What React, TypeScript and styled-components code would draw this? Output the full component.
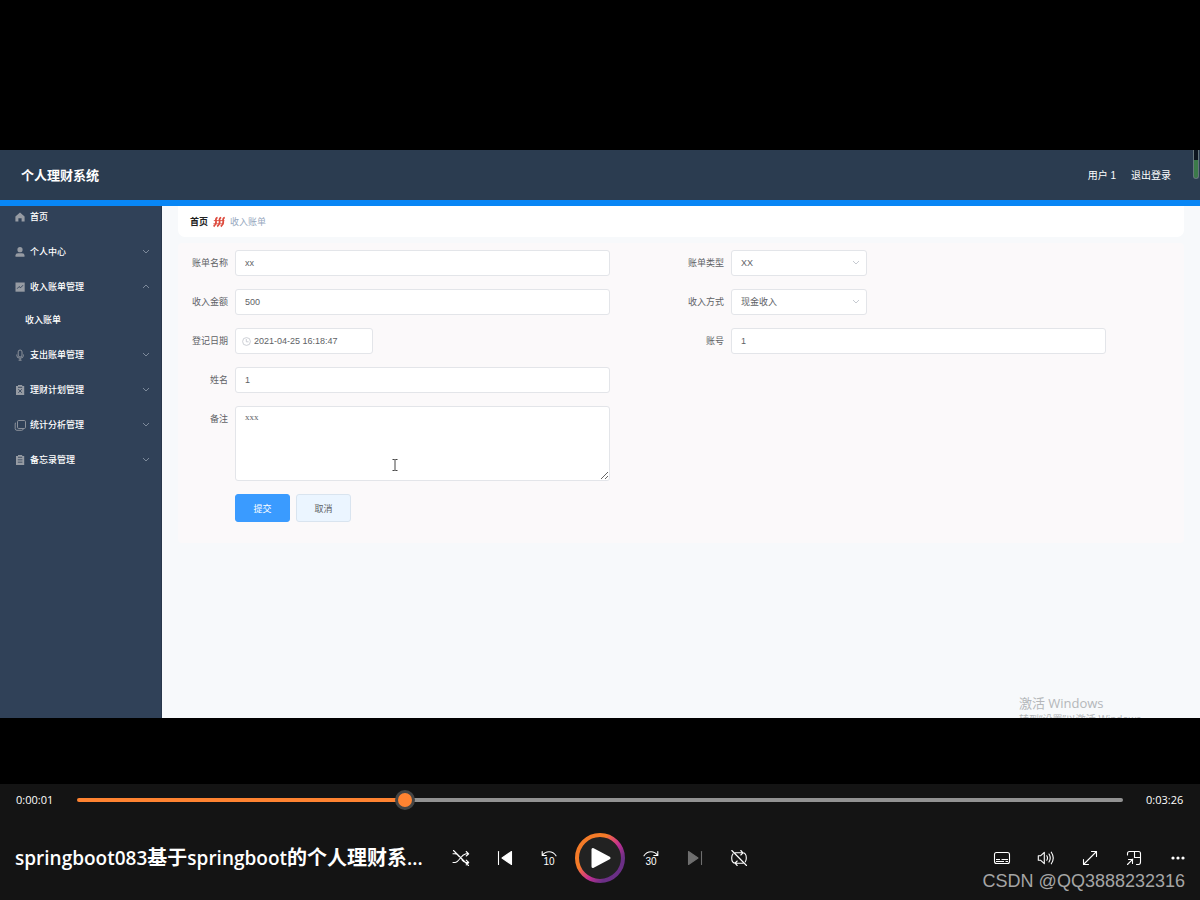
import React from "react";
import styled, { createGlobalStyle, css } from "styled-components";

const cjk = `"Noto Sans CJK SC", sans-serif`;

const GlobalStyle = createGlobalStyle`
  *, *::before, *::after { box-sizing: border-box; }
  body { margin: 0; background: #000; font-family: "Liberation Sans", ${cjk}; }
  button, input, select, textarea { font: inherit; margin: 0; }
  ul { list-style: none; margin: 0; padding: 0; }
  a { color: inherit; text-decoration: none; }
`;

const Page = styled.div`
  position: relative;
  display: flex;
  flex-direction: column;
  min-height: 100vh;
  background: #000;
`;

const Stage = styled.main`
  flex: 1;
  display: flex;
  padding: 150px 0 66px;
`;

const Frame = styled.div`
  position: relative;
  flex: 1;
  display: flex;
  flex-direction: column;
  overflow: hidden;
  background: #f7f9fb;
`;

const Header = styled.header`
  display: flex;
  align-items: center;
  justify-content: space-between;
  height: 56px;
  padding: 2px 29px 0 21px;
  background: #2b3c50;
  border-bottom: 6px solid #0886f5;
  color: #fff;
`;

const Brand = styled.h1`
  margin: 0;
  font-size: 13px;
  line-height: 20px;
  font-weight: 700;
`;

const Account = styled.div`
  display: flex;
  gap: 15px;
  font-size: 10px;
  line-height: 20px;
`;

const Meter = styled.div`
  position: absolute;
  top: 0;
  right: 1px;
  width: 6px;
  height: 29px;
  border: 1px solid #66767c;
  border-top: 0;
  border-radius: 0 0 3px 3px;
  background: linear-gradient(#0d1620 10px, #3c7a4a 10px);
`;

const Body = styled.div`
  flex: 1;
  display: flex;
`;

const Sidebar = styled.nav`
  flex: none;
  width: 162px;
  padding: 1px 11px 0 14px;
  background: #304158;
  border-right: 1px solid #28374b;
  color: #fff;
`;

const Menu = styled.ul`
  display: flex;
  flex-direction: column;
  gap: 15px;
`;

const MenuLink = styled.a`
  display: flex;
  align-items: center;
  gap: 4px;
  height: 20px;
  font-size: 9px;
  line-height: 20px;
  font-weight: 500;
`;

const SubMenu = styled.ul`
  margin-top: 13px;
  padding-left: 11px;
`;

const Grow = styled.span`
  flex: 1;
`;

const Content = styled.section`
  flex: 1;
  min-width: 0;
  padding: 0 16px;
`;

const Breadcrumb = styled.div`
  display: flex;
  align-items: center;
  gap: 5px;
  height: 31px;
  padding: 0 12px;
  border-radius: 0 0 7px 7px;
  background: #fff;
  font-size: 9px;
  line-height: 20px;
  color: #97a8be;
`;

const CrumbHome = styled.a`
  font-weight: 700;
  color: #222;
`;

const Card = styled.form`
  margin-top: 6px;
  padding: 7px 7px 21px;
  border-radius: 4px;
  background: #fbf9fa;
  font-size: 9px;
  color: #606266;
`;

const Grid = styled.div`
  display: grid;
  grid-template-columns: 1fr 1fr;
  gap: 13px 0;
`;

const Field = styled.div<{ $first?: boolean }>`
  ${(p) => p.$first && "grid-column: 1;"}
  display: flex;
  gap: 7px;
  padding-right: 71px;
`;

const Label = styled.label`
  flex: none;
  width: 43px;
  line-height: 26px;
  text-align: right;
  white-space: nowrap;
`;

const box = css`
  border: 1px solid #e3e5e9;
  border-radius: 3px;
  background: #fff;
  color: #606266;
  outline: none;
`;

const TextInput = styled.input`
  ${box}
  flex: 1;
  min-width: 0;
  height: 26px;
  padding: 0 9px;
`;

const DateBox = styled.div`
  ${box}
  display: flex;
  align-items: center;
  gap: 3px;
  width: 138px;
  height: 26px;
  padding: 0 6px;
`;

const DateInput = styled.input`
  flex: 1;
  min-width: 0;
  padding: 0;
  border: 0;
  background: none;
  color: inherit;
  outline: none;
`;

const SelectBox = styled.div`
  position: relative;
  width: 136px;

  svg {
    position: absolute;
    top: 9px;
    right: 7px;
    pointer-events: none;
  }
`;

const Select = styled.select`
  ${box}
  appearance: none;
  width: 100%;
  height: 26px;
  padding: 0 9px;
`;

const AreaBox = styled.div`
  position: relative;
  flex: 1;
  display: flex;
`;

const TextArea = styled.textarea`
  ${box}
  flex: 1;
  height: 75px;
  padding: 4px 9px;
  font-family: "Liberation Serif", serif;
  font-size: 9px;
  line-height: 13px;
`;

const Cursor = styled.svg`
  position: absolute;
  left: 157px;
  top: 53px;
`;

const Actions = styled.div`
  display: flex;
  gap: 6px;
  margin-top: 13px;
  padding-left: 50px;
`;

const ActionButton = styled.button<{ $primary?: boolean }>`
  width: 55px;
  height: 28px;
  padding: 0;
  border: 1px solid ${(p) => (p.$primary ? "#3a9bff" : "#d9e4ef")};
  border-radius: 3px;
  background: ${(p) => (p.$primary ? "#3a9bff" : "#ebf5ff")};
  color: ${(p) => (p.$primary ? "#fff" : "#606266")};
`;

const Activation = styled.div`
  position: absolute;
  right: 49px;
  bottom: -9px;
  font-family: "Open Sans", ${cjk};
  color: #b4b7ba;
`;

const ActivationTitle = styled.div`
  font-size: 13px;
  line-height: 18px;
`;

const ActivationHint = styled.div`
  font-size: 10px;
  line-height: 15px;
`;

const Player = styled.footer`
  background: #141414;
  color: #fff;
  font-family: "Open Sans", ${cjk};
`;

const Timeline = styled.div`
  display: flex;
  align-items: center;
  gap: 23px;
  height: 32px;
  padding: 0 16px;
  font-size: 11px;
  line-height: 16px;
`;

const Time = styled.span`
  width: 38px;
`;

const Seek = styled.input<{ $played: number }>`
  appearance: none;
  flex: 1;
  min-width: 0;
  height: 20px;
  background: none;
  outline: none;

  &::-webkit-slider-runnable-track {
    height: 4px;
    border-radius: 2px;
    background: linear-gradient(
      to right,
      #ff8331 ${(p) => p.$played}%,
      #929292 ${(p) => p.$played}%
    );
  }

  &::-webkit-slider-thumb {
    appearance: none;
    width: 20px;
    height: 20px;
    margin-top: -8px;
    border: 3px solid #454545;
    border-radius: 50%;
    background: #ff8331;
  }
`;

const Controls = styled.div`
  display: grid;
  grid-template-columns: minmax(0, 1fr) auto minmax(0, 1fr);
  align-items: center;
  height: 84px;
`;

const Title = styled.h2`
  margin: 0;
  padding-left: 15px;
  overflow: hidden;
  white-space: nowrap;
  font-size: 19px;
  line-height: 28px;
  font-weight: 600;
`;

const Han = styled.span`
  font-size: 20px;
  font-weight: 700;
`;

const Group = styled.div<{ $end?: boolean }>`
  display: flex;
  align-items: center;
  justify-content: ${(p) => (p.$end ? "flex-end" : "center")};
`;

const IconButton = styled.button`
  display: grid;
  place-items: center;
  width: 44px;
  height: 44px;
  padding: 0;
  border: 0;
  background: none;
  color: #fff;

  &:disabled {
    color: #6f6f6f;
  }
`;

const PlayButton = styled.button`
  display: grid;
  width: 50px;
  height: 50px;
  margin: 0 4px;
  padding: 0;
  border: 0;
  background: none;
`;

const Credit = styled.div`
  position: absolute;
  right: 15px;
  bottom: 8px;
  font-size: 18px;
  line-height: 22px;
  color: #a5a5a5;
`;

const Chevron = ({ up, color = "#8693a3" }: { up?: boolean; color?: string }) => (
  <svg width="8" height="8" viewBox="0 0 8 8" fill="none" stroke={color} strokeWidth="0.9">
    <path d={up ? "M1 5 4 2 7 5" : "M1 2 4 5 7 2"} />
  </svg>
);

const menuIcons: Record<string, React.ReactNode> = {
  home: <path fill="currentColor" d="M6 1.4 10.6 5.4V10.6H7.6V7.2H4.4V10.6H1.4V5.4Z" />,
  user: (
    <g fill="currentColor">
      <circle cx="6" cy="3.7" r="2.6" />
      <path d="M1.5 10.7V9.2Q1.5 7.2 4 7.2H8Q10.5 7.2 10.5 9.2V10.7Z" />
    </g>
  ),
  chart: (
    <>
      <path fill="currentColor" d="M1.5 1.5H10.7V10.7H1.5Z" />
      <path stroke="#304158" d="M3.2 7.7 5 5.6 6.7 6.7 9 4.2" />
    </>
  ),
  mic: (
    <g stroke="currentColor">
      <rect x="4.2" y="1" width="3.8" height="7" rx="1.9" />
      <path d="M2.8 5.5V6.6Q2.8 9.2 6.1 9.2 9.4 9.2 9.4 6.6V5.5M6.1 9.2V11.2M4.6 11.2H7.6" />
    </g>
  ),
  plan: (
    <>
      <path fill="currentColor" d="M2 2H4V1H8.2V2H10.2V11H2Z" />
      <path stroke="#304158" d="M4 3.3H8.2M4.4 5.2 7.8 8.8M7.8 5.2 4.4 8.8" />
    </>
  ),
  copy: (
    <g stroke="currentColor">
      <rect x="3.5" y="1.5" width="8" height="8" rx="1.2" />
      <path d="M2 3.6Q1.2 3.8 1.2 5V9.6Q1.2 11.3 3 11.3H7.6Q9 11.3 9.3 10" />
    </g>
  ),
  memo: (
    <>
      <path fill="currentColor" d="M2 2H4V1H8.2V2H10.2V11H2Z" />
      <path stroke="#304158" d="M4 3.3H8.2M3.8 5.8H8.4M3.8 8.2H8.4" strokeWidth="0.8" />
    </>
  ),
};

const MenuIcon = ({ name }: { name: string }) => (
  <svg width="12" height="12" viewBox="0 0 12 12" fill="none" color="#969ba3" strokeWidth="0.9">
    {menuIcons[name]}
  </svg>
);

const menu = [
  { icon: "home", text: "首页" },
  { icon: "user", text: "个人中心", arrow: true },
  { icon: "chart", text: "收入账单管理", arrow: true, children: ["收入账单"] },
  { icon: "mic", text: "支出账单管理", arrow: true },
  { icon: "plan", text: "理财计划管理", arrow: true },
  { icon: "copy", text: "统计分析管理", arrow: true },
  { icon: "memo", text: "备忘录管理", arrow: true },
];

const Glyph = ({ children }: { children: React.ReactNode }) => (
  <svg
    width="18"
    height="18"
    viewBox="0 0 18 18"
    fill="none"
    stroke="currentColor"
    strokeWidth="1.1"
    strokeLinecap="round"
    strokeLinejoin="round"
  >
    {children}
  </svg>
);

const SkipText = ({ children }: { children: string }) => (
  <text
    x="9"
    y="16"
    textAnchor="middle"
    fontSize="10"
    fontFamily="Liberation Sans"
    fill="currentColor"
    stroke="none"
  >
    {children}
  </text>
);

export default function App() {
  return (
    <Page>
      <GlobalStyle />
      <Stage>
        <Frame>
          <Header>
            <Brand>个人理财系统</Brand>
            <Account>
              <span>用户 1</span>
              <a href="#logout">退出登录</a>
            </Account>
          </Header>
          <Meter />
          <Body>
            <Sidebar>
              <Menu>
                {menu.map((item) => (
                  <li key={item.text}>
                    <MenuLink href="#menu">
                      <MenuIcon name={item.icon} />
                      {item.text}
                      <Grow />
                      {item.arrow && <Chevron up={!!item.children} />}
                    </MenuLink>
                    {item.children && (
                      <SubMenu>
                        {item.children.map((child) => (
                          <li key={child}>
                            <MenuLink href="#bill">{child}</MenuLink>
                          </li>
                        ))}
                      </SubMenu>
                    )}
                  </li>
                ))}
              </Menu>
            </Sidebar>
            <Content>
              <Breadcrumb>
                <CrumbHome href="#home">首页</CrumbHome>
                <svg width="12" height="12" viewBox="0 0 12 12" fill="none" stroke="#dd4b3e" strokeWidth="1.7">
                  <path d="M4.6 1.5Q2.4 2 3 5T.6 10.5M8.2 1.5Q6 2 6.6 5T4.2 10.5M11.8 1.5Q9.6 2 10.2 5T7.8 10.5" />
                  <path d="M.8 4.6H11.4M.4 7.8H10.8" strokeWidth="0.9" />
                </svg>
                <span>收入账单</span>
              </Breadcrumb>
              <Card onSubmit={(e) => e.preventDefault()}>
                <Grid>
                  <Field>
                    <Label htmlFor="name">账单名称</Label>
                    <TextInput id="name" defaultValue="xx" />
                  </Field>
                  <Field>
                    <Label htmlFor="type">账单类型</Label>
                    <SelectBox>
                      <Select id="type">
                        <option>XX</option>
                      </Select>
                      <Chevron color="#c0c4cc" />
                    </SelectBox>
                  </Field>
                  <Field>
                    <Label htmlFor="amount">收入金额</Label>
                    <TextInput id="amount" defaultValue="500" />
                  </Field>
                  <Field>
                    <Label htmlFor="method">收入方式</Label>
                    <SelectBox>
                      <Select id="method">
                        <option>现金收入</option>
                      </Select>
                      <Chevron color="#c0c4cc" />
                    </SelectBox>
                  </Field>
                  <Field>
                    <Label htmlFor="date">登记日期</Label>
                    <DateBox>
                      <svg width="9" height="9" viewBox="0 0 9 9" fill="none" stroke="#c0c4cc" strokeWidth="0.8">
                        <circle cx="4.5" cy="4.5" r="3.9" />
                        <path d="M4.3 2V4.8H6.6" />
                      </svg>
                      <DateInput id="date" defaultValue="2021-04-25 16:18:47" />
                    </DateBox>
                  </Field>
                  <Field>
                    <Label htmlFor="account">账号</Label>
                    <TextInput id="account" defaultValue="1" />
                  </Field>
                  <Field $first>
                    <Label htmlFor="person">姓名</Label>
                    <TextInput id="person" defaultValue="1" />
                  </Field>
                  <Field $first>
                    <Label htmlFor="note">备注</Label>
                    <AreaBox>
                      <TextArea id="note" defaultValue="xxx" />
                      <Cursor width="6" height="12" viewBox="0 0 6 12" fill="none" stroke="#444">
                        <path d="M.5 .5H2.5L3 1 3.5 .5H5.5M3 1V11M.5 11.5H2.5L3 11 3.5 11.5H5.5" />
                      </Cursor>
                    </AreaBox>
                  </Field>
                </Grid>
                <Actions>
                  <ActionButton type="submit" $primary>
                    提交
                  </ActionButton>
                  <ActionButton type="button">取消</ActionButton>
                </Actions>
              </Card>
            </Content>
          </Body>
          <Activation>
            <ActivationTitle>激活 Windows</ActivationTitle>
            <ActivationHint>转到“设置”以激活 Windows。</ActivationHint>
          </Activation>
        </Frame>
      </Stage>
      <Player>
        <Timeline>
          <Time>0:00:01</Time>
          <Seek type="range" aria-label="Seek" min={0} max={100} defaultValue={31} $played={31} />
          <Time>0:03:26</Time>
        </Timeline>
        <Controls>
          <Title>
            springboot083<Han>基于</Han>springboot<Han>的个人理财系</Han>...
          </Title>
          <Group>
            <IconButton aria-label="Shuffle off">
              <Glyph>
                <path d="M1 13.5H3Q5 13.5 8 9.5T14 4.8H16.5M14.2 2.5 16.7 4.8 14.2 7M1 4.8H3Q5 4.8 7 7.5M10 10.8Q12 13.5 14 13.5H16.5M14.2 11.2 16.7 13.5 14.2 15.8M1.5 1.5 16.5 16.5" />
              </Glyph>
            </IconButton>
            <IconButton aria-label="Previous">
              <Glyph>
                <path d="M2.5 2.5V15.5" />
                <path fill="currentColor" d="M15.5 2.5V15.5L6 9Z" />
              </Glyph>
            </IconButton>
            <IconButton aria-label="Back 10 seconds">
              <Glyph>
                <path d="M2.2 2.5V6.5H6.2M2.5 6.2Q5 2.8 9 2.8 13.5 2.8 16 6.8" />
                <SkipText>10</SkipText>
              </Glyph>
            </IconButton>
            <PlayButton aria-label="Play">
              <svg width="50" height="50" viewBox="0 0 50 50">
                <defs>
                  <linearGradient id="ring" x1="0.1" y1="0.15" x2="0.9" y2="0.85">
                    <stop offset="0.3" stopColor="#f47b28" />
                    <stop offset="0.4" stopColor="#e85a58" />
                    <stop offset="0.6" stopColor="#c22f92" />
                    <stop offset="0.85" stopColor="#6b2f86" />
                  </linearGradient>
                </defs>
                <circle cx="25" cy="25" r="23" fill="#222" stroke="url(#ring)" strokeWidth="4" />
                <path
                  d="M18 16.5V33.5L34 25Z"
                  fill="#fff"
                  stroke="#fff"
                  strokeWidth="3"
                  strokeLinejoin="round"
                />
              </svg>
            </PlayButton>
            <IconButton aria-label="Forward 30 seconds">
              <Glyph>
                <path d="M15.8 2.5V6.5H11.8M15.5 6.2Q13 2.8 9 2.8 4.5 2.8 2 6.8" />
                <SkipText>30</SkipText>
              </Glyph>
            </IconButton>
            <IconButton aria-label="Next" disabled>
              <Glyph>
                <path d="M15.5 2.5V15.5" />
                <path fill="currentColor" d="M2.5 2.5V15.5L12 9Z" />
              </Glyph>
            </IconButton>
            <IconButton aria-label="Repeat off">
              <Glyph>
                <path d="M5 3.8H12.5Q16.3 3.8 16.3 9 16.3 11.3 15.3 12.8M10.8 1.5 13 3.8 10.8 6M13 14.2H5.5Q1.7 14.2 1.7 9 1.7 6.2 3 4.8M7.2 12 5 14.2 7.2 16.5M1.8 1.5 16.5 16.5" />
              </Glyph>
            </IconButton>
          </Group>
          <Group $end>
            <IconButton aria-label="Subtitles">
              <Glyph>
                <rect x="1.5" y="3.5" width="15" height="11" rx="2" />
                <path d="M3 10.5H7M8.5 10.5H15M3 12.5H11M12.5 12.5H15" strokeWidth="1" strokeLinecap="butt" />
              </Glyph>
            </IconButton>
            <IconButton aria-label="Volume">
              <Glyph>
                <path d="M1.3 6.8H3.5L7.3 3.3V14.7L3.5 11.2H1.3ZM9.8 6.8Q11.2 9 9.8 11.2M12 5Q14.5 9 12 13M14.3 3.2Q18.2 9 14.3 14.8" />
              </Glyph>
            </IconButton>
            <IconButton aria-label="Full screen">
              <Glyph>
                <path d="M2.5 15.5 15.5 2.5M10.5 2.5H15.5V7.5M2.5 10.5V15.5H7.5" />
              </Glyph>
            </IconButton>
            <IconButton aria-label="Mini player">
              <Glyph>
                <path d="M2.5 6V4.5Q2.5 2.5 4.5 2.5H13.5Q15.5 2.5 15.5 4.5V13Q15.5 15.5 13.5 15.5H11.5M9.5 2.5V8.5H15.5M2.5 15.5 7.8 10.2M3.5 10.5H7.5V14.5" />
              </Glyph>
            </IconButton>
            <IconButton aria-label="More">
              <Glyph>
                <g fill="currentColor" stroke="none">
                  <circle cx="4" cy="9" r="1.6" />
                  <circle cx="9" cy="9" r="1.6" />
                  <circle cx="14" cy="9" r="1.6" />
                </g>
              </Glyph>
            </IconButton>
          </Group>
        </Controls>
      </Player>
      <Credit>CSDN @QQ3888232316</Credit>
    </Page>
  );
}
